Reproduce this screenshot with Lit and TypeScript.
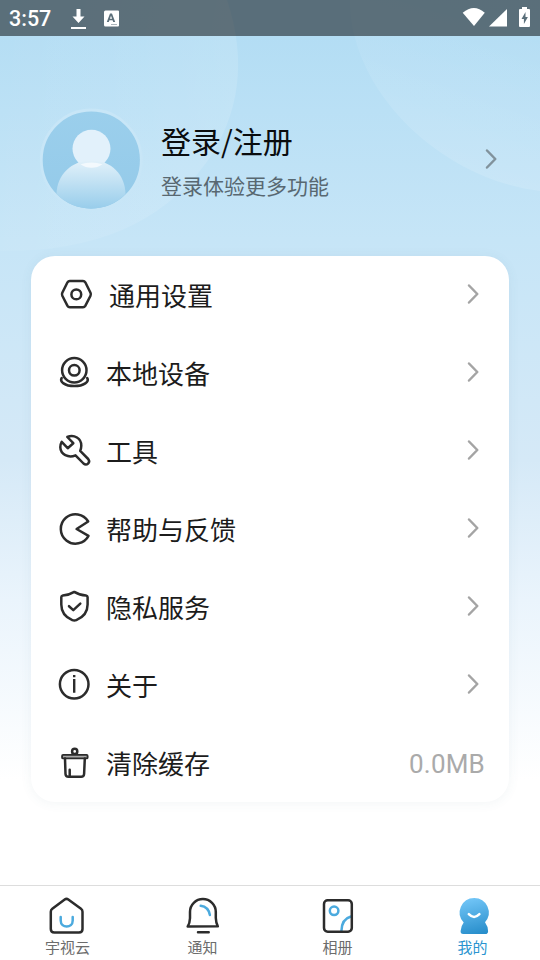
import { LitElement, html, svg, css } from "lit";
import { customElement } from "lit/decorators.js";
import { classMap } from "lit/directives/class-map.js";

const icons = {
  settings: svg`<path d="M14.800 5.900h13.200q1.500 0 2.300 1.400l5.200 10.500q.7 1.500 0 2.900l-5.200 10.200q-.8 1.400-2.300 1.400H14.800q-1.500 0-2.300-1.400L7.300 20.700q-.7-1.400 0-2.900l5.200-10.500Q13.300 5.900 14.800 5.900z"/><circle cx="21.300" cy="19.400" r="4.900"/>`,
  device: svg`<circle cx="19.300" cy="17.300" r="12.200"/><circle cx="19.300" cy="17.300" r="5.300"/><path d="M6.700 25C4.500 28.500 9.500 33.100 19.300 33.100S34.500 28.500 32.200 25"/>`,
  tools: svg`<path d="M12.300 6C19 2.800 26.600 7.500 26.300 14.700q-.1 2.800-1.100 5.200l8 8.100c2.700 3.300-1.500 7.300-4.700 4.500l-8-8.200C13.500 27.300 5.500 23.600 5.300 16.300q0-3 1.400-5.400l6 6.300 5.600-5z"/>`,
  help: svg`<path d="M33.200 12.500A14.700 14.700 0 1 0 33.500 26.800L21.600 20z"/>`,
  privacy: svg`<path d="M19.300 4.900q5.500 3.400 11.700 3.500 1.500.2 1.600 1.800v7.300c0 8-4.300 12.700-11.300 15.600q-2 .8-4 0C10.300 30.200 6.300 25.500 6.300 17.500v-7.300q.1-1.600 1.500-1.800Q13.800 8.300 19.300 4.900z"/><path d="m14 19.200 4.300 3.900 7-6.400"/>`,
  about: svg`<circle cx="19.200" cy="19.200" r="14.300"/><path class="plain" d="M18 9.900h2.400v2.300H18zm0 4.200h2.400v13.600H18z"/>`,
  clean: svg`<circle cx="19.700" cy="8.400" r="2.600"/><rect class="lid" x="7.100" y="11.900" width="25.500" height="3.500" rx="1"/><path d="M10 15.500 10.500 31q.2 2.800 3 2.800h12.600q2.800 0 3-2.800L29.800 15.500M14.700 26.800v7"/>`,
  home: svg`<path d="M17.700 3.500q1.800-1.300 3.600 0L34 12.700q1.500 1.100 1.500 3V33q0 3.500-3.500 3.500H7.300q-3.500 0-3.500-3.500V15.700q0-1.900 1.500-3z"/><path class="accent" d="M13.700 21v3.600c0 7.900 12 7.900 12 0V21"/>`,
  notice: svg`<path d="M5.700 30.600q2-2.800 2.300-8.300V16a12.900 12.900 0 0 1 25.800 0v6q.2 5 2 8.300zM16 36.200h10.700"/><path class="accent" d="M18.700 9.800q7.700 1 9.200 9.200"/>`,
  album: svg`<circle class="accent" cx="17.100" cy="14.800" r="4.300"/><path class="accent" d="M34 20.500Q24.500 23 24.400 35.300"/><rect x="7" y="4.300" width="27.800" height="31.500" rx="3.700"/>`,
  mine: svg`<defs><linearGradient id="blue" x1="0.500" y1="0" x2="0.700" y2="1"><stop offset="0" stop-color="#70c4f6"/><stop offset="1" stop-color="#288ecb"/></linearGradient></defs><path class="body" d="M22.200 2a14.500 14.500 0 0 1 10.800 24.200q3.100 4.200 3.100 9 0 2.800-2.800 2.800H11.200q-2.800 0-2.600-2.900.2-4.900 3.100-8.600A14.500 14.500 0 0 1 22.200 2z"/><path class="smile" d="M16.800 18.200q5.300 5.500 10.600 0"/>`,
};

type IconName = keyof typeof icons;

const icon = (name: IconName) => html`<svg class="icon" viewBox="0 0 40 40">${icons[name]}</svg>`;
const chevron = html`<svg class="chevron" viewBox="0 0 14 22"><path d="m3 2.500 8.300 8.500L3 19.500"/></svg>`;

const rows: { icon: IconName; label: string; value?: string; wide?: boolean }[] = [
  { icon: "settings", label: "通用设置", wide: true },
  { icon: "device", label: "本地设备" },
  { icon: "tools", label: "工具" },
  { icon: "help", label: "帮助与反馈" },
  { icon: "privacy", label: "隐私服务" },
  { icon: "about", label: "关于" },
  { icon: "clean", label: "清除缓存", value: "0.0MB" },
];

const tabs: { icon: IconName; label: string; active?: boolean }[] = [
  { icon: "home", label: "宇视云" },
  { icon: "notice", label: "通知" },
  { icon: "album", label: "相册" },
  { icon: "mine", label: "我的", active: true },
];

@customElement("app-root")
export class AppRoot extends LitElement {
  static styles = css`
    :host {
      display: flex;
      flex-direction: column;
      position: relative;
      width: 540px;
      height: 960px;
      overflow: hidden;
      box-sizing: border-box;
      font-family: Roboto, "Noto Sans CJK SC", sans-serif;
      background: linear-gradient(#b3ddf4 36px, #c6e5f7 240px, #d5e9f7 460px, #eaf4fc 600px, #fff 780px);
    }
    * { box-sizing: border-box; }
    svg { display: block; flex: none; }
    .backdrop { position: absolute; left: 0; top: 0; width: 540px; height: 300px; }
    .status {
      position: relative;
      height: 36px;
      flex: none;
      display: flex;
      align-items: center;
      padding-left: 9px;
      background: rgba(0, 0, 0, 0.5);
      color: #fff;
      font-size: 21.500px;
      font-weight: 500;
    }
    .time { width: 61px; line-height: 36px; padding-top: 2px; }
    .glyphs { fill: #fff; margin-top: 1px; }
    .right { margin-left: auto; margin-top: 0; }
    .profile {
      position: relative;
      height: 220px;
      flex: none;
      display: flex;
      align-items: center;
      padding: 0 42px 0 39px;
    }
    .avatar { width: 104px; height: 104px; margin-top: 28px; }
    .names { margin: 26px auto 0 18px; font-family: "Noto Sans CJK SC", sans-serif; }
    .title { font-size: 30px; line-height: 44px; color: #0a0c0e; }
    .sub { font-size: 21px; line-height: 31px; margin-top: 8px; color: #586871; }
    .profile .chevron { margin-top: 26px; stroke: #81929c; }
    .chevron { width: 14px; height: 22px; fill: none; stroke: #a4a4a4; stroke-width: 2.500; stroke-linecap: round; stroke-linejoin: round; }
    .card {
      position: relative;
      margin: 0 31px;
      flex: none;
      border-radius: 24px;
      background: #fff;
      box-shadow: 0 1px 12px rgba(70, 110, 130, 0.07);
    }
    .row { height: 78px; display: flex; align-items: center; padding: 0 29px 0 24px; }
    .label { margin: 0 0 0 11px; font-size: 26px; font-family: "Noto Sans CJK SC", sans-serif; line-height: 38px; color: #1c1c1c; }
    .label.wide { margin-left: 14px; }
    .row .chevron { margin: -2px 0 0 auto; }
    .value { margin: 2px -5px 0 auto; font-size: 26px; letter-spacing: 0.200px; color: #aaa; }
    .icon { width: 40px; height: 40px; fill: none; stroke: #2c2c2c; stroke-width: 2.500; stroke-linecap: round; stroke-linejoin: round; }
    .plain { fill: #2c2c2c; stroke: none; }
    .lid { fill: #aaa; stroke-width: 1.900; }
    .tabs {
      position: relative;
      margin-top: auto;
      height: 75px;
      flex: none;
      display: grid;
      grid-template-columns: repeat(4, 1fr);
      border-top: 1px solid #ddd;
      background: #fff;
    }
    .tab { display: flex; flex-direction: column; align-items: center; padding: 10px 0 0 0; font-size: 15px; font-family: "Noto Sans CJK SC", sans-serif; line-height: 22px; color: #6c6c6c; }
    .tab .icon { margin-right: 1.400px; }
    .tab.active { color: #2a94d0; }
    .accent { stroke: #4baade; }
    .body { fill: url(#blue); stroke: none; }
    .smile { stroke: #fff; stroke-width: 2.500; }
  `;

  render() {
    return html`
      <svg class="backdrop" viewBox="0 0 540 300">
        <defs>
          <linearGradient id="left" x1="0" x2="1" y1="0.300" y2="0.500"><stop offset="0" stop-color="#fff" stop-opacity="0.030"/><stop offset="1" stop-color="#fff" stop-opacity="0.130"/></linearGradient>
          <linearGradient id="right" x1="0.600" x2="0.300" y1="0" y2="1"><stop offset="0" stop-color="#fff" stop-opacity="0.020"/><stop offset="1" stop-color="#fff" stop-opacity="0.150"/></linearGradient>
        </defs>
        <path fill="url(#left)" d="M0 0H227C247 60 240 115 206 163C160 226 90 252 0 251z"/>
        <path fill="url(#right)" d="M350 0C350 95 445 180 540 191V0z"/>
      </svg>
      <header class="status">
        <span class="time">3:57</span>
        <svg class="glyphs" width="50" height="24" viewBox="0 0 50 24">
          <path d="M6.500 2h4v7.500h4L8.500 16l-6-6.500h4zM1 20h15v1.900H1z"/>
          <path fill-rule="evenodd" d="M35.500 3.500H48q1 0 1 1v14q0 1-1 1H35.500q-1.500 0-1.500-1.500v-13Q34 3.500 35.500 3.500zM40 6.500l-3.200 8.500h2l.6-1.800h3.200l.6 1.800h2L42 6.500zm1 2.200 1.100 3h-2.200zM41.500 17v1h1v-1zm2 0v1h1v-1zm2 0v1h1v-1z"/>
        </svg>
        <svg class="glyphs right" width="78" height="24" viewBox="0 0 78 24">
          <path d="M.700 6.800Q12 -2.600 22.800 6.800L12 20z"/>
          <path d="M27 20.500h18V3z"/>
          <path fill-rule="evenodd" d="M60 1h5v2h2q1 0 1 1v16q0 1-1 1H58q-1 0-1-1V4q0-1 1-1h2zM63.500 6l-4 7h2.400v5l4-7h-2.400z"/>
        </svg>
      </header>
      <section class="profile">
        <svg class="avatar" viewBox="0 0 104 104">
          <defs>
            <linearGradient id="face" x2="0" y2="1"><stop offset="0" stop-color="#9bcfec"/><stop offset="1" stop-color="#94cae9"/></linearGradient>
            <linearGradient id="torso" x2="0" y2="1"><stop offset="0" stop-color="#e2f1fa"/><stop offset="1" stop-color="#98cdeb"/></linearGradient>
          </defs>
          <circle cx="52.300" cy="52" r="50" fill="url(#face)" stroke="#c8e6f7" stroke-width="2.800"/>
          <circle cx="52.500" cy="40.800" r="19" fill="#e2f1fb"/>
          <path d="M17.500 86C18 67 32 52.500 52.500 52.500S86 67 86.500 86A48 48 0 0 1 17.500 86z" fill="url(#torso)"/>
          <path d="M41.500 56.300a19 19 0 0 0 22 0A34 34 0 0 0 41.500 56.300z" fill="#f3f9fd"/>
        </svg>
        <div class="names">
          <div class="title">登录/注册</div>
          <div class="sub">登录体验更多功能</div>
        </div>
        ${chevron}
      </section>
      <main class="card">
        ${rows.map((r) => html`
          <div class="row">
            ${icon(r.icon)}
            <span class=${classMap({ label: true, wide: !!r.wide })}>${r.label}</span>
            ${r.value ? html`<span class="value">${r.value}</span>` : chevron}
          </div>`)}
      </main>
      <nav class="tabs">
        ${tabs.map((t) => html`
          <div class=${classMap({ tab: true, active: !!t.active })}>
            ${icon(t.icon)}
            <span>${t.label}</span>
          </div>`)}
      </nav>
    `;
  }
}
